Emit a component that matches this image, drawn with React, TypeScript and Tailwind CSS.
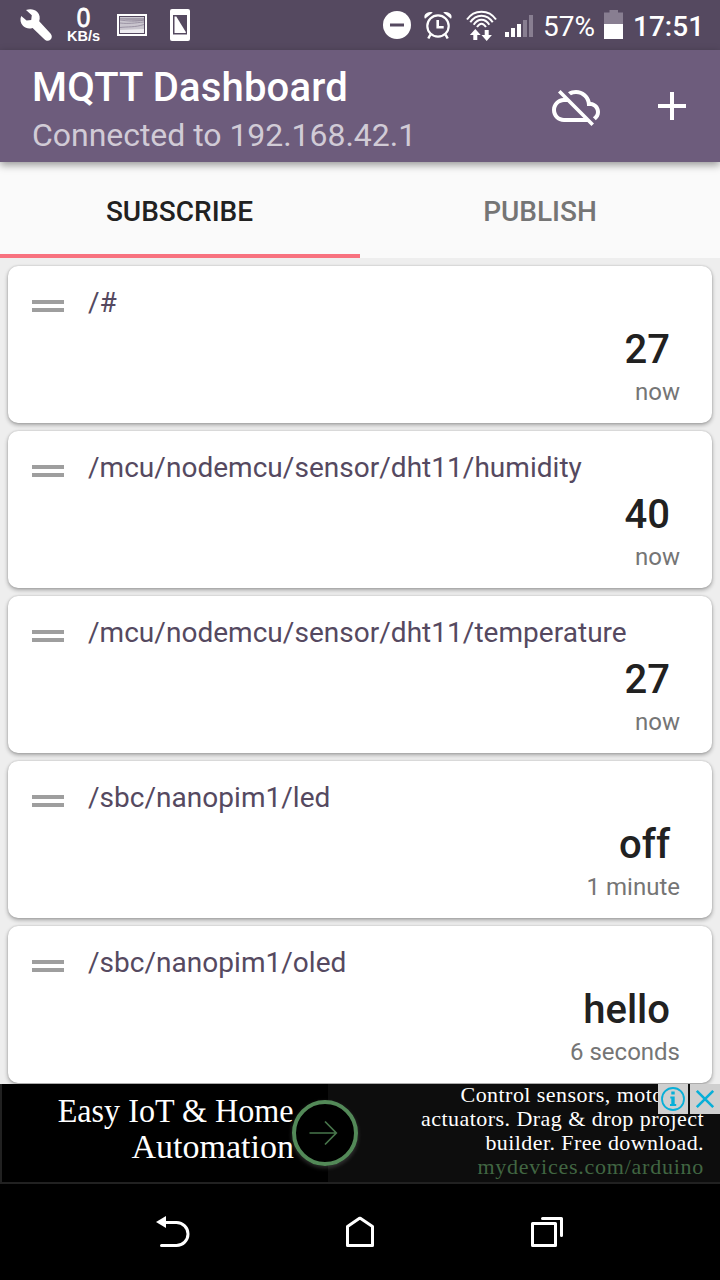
import React from "react";

type IconProps = { box: string; className: string; children: React.ReactNode };

function Icon({ box, className, children }: IconProps) {
  return (
    <svg viewBox={box} className={`shrink-0 overflow-visible ${className}`} fill="none">
      {children}
    </svg>
  );
}

const topics = [
  { topic: "/#", value: "27", age: "now" },
  { topic: "/mcu/nodemcu/sensor/dht11/humidity", value: "40", age: "now" },
  { topic: "/mcu/nodemcu/sensor/dht11/temperature", value: "27", age: "now" },
  { topic: "/sbc/nanopim1/led", value: "off", age: "1 minute" },
  { topic: "/sbc/nanopim1/oled", value: "hello", age: "6 seconds" },
];

function StatusBar() {
  return (
    <div className="flex h-[50px] shrink-0 items-start bg-[#554960] text-white">
      <Icon box="20 9 32 32" className="ml-5 mt-[9px] h-8 w-8">
        <path
          d="M26 10 C30 8.500 34.500 9 37.300 12 C39.800 14.500 40.300 18 39.200 21.200 L50.700 33.700 C52.200 35.500 52.200 38 50.600 39.600 C48.800 41.400 46.200 41.200 44.600 39.500 L32.600 27.900 C29.200 29.200 25.600 28.400 23.100 26 C20.400 23.300 19.800 19.200 21.200 16 L26.600 20.600 L31.200 20 L31.800 15.300 Z"
          fill="#fff"
        />
      </Icon>
      <div className="ml-[14px] mt-[7px] flex w-[35px] flex-col items-center font-['Liberation_Sans']">
        <span className="h-[21px] scale-x-[0.9] text-[27px] leading-[22px] [-webkit-text-stroke:0.8px_white]">0</span>
        <span className="whitespace-nowrap text-[14.5px] font-bold leading-[16px]">KB/s</span>
      </div>
      <Icon box="117 14 30 22" className="ml-[16px] mt-[14px] h-[22px] w-[30px]">
        <path d="M118 15h28v20h-28z" stroke="#fff" strokeWidth="2" />
        <path d="M120 17h24v16h-24z" fill="#c9c5ce" />
        <path d="M120 18h24v2.500c-9 1.500-16-1-24-1z" fill="#a49dab" />
        <path d="M120 20c8 1 15 2 24 0M120 23c9 1 14 0 24-1M120 27.500c8-1 15 0 24-3" stroke="#8f8799" strokeWidth="0.800" />
        <path d="M120 30c9 0 16-1 24-1v4h-24z" fill="#eeecf0" />
      </Icon>
      <Icon box="170 9 20 32" className="ml-[23px] mt-[9px] h-8 w-5">
        <rect x="170" y="9" width="20" height="32" rx="2" fill="#fff" />
        <path d="M173 15h14v19.500h-14z" fill="#554960" />
        <path d="M174.500 16.500h1.800l9.500 15.500v1h-11.300z" fill="#fff" />
      </Icon>
      <Icon box="383 11 28 28" className="ml-auto mt-[11px] h-7 w-7">
        <circle cx="397" cy="25" r="14" fill="#fff" />
        <path d="M390 25h14" stroke="#554960" strokeWidth="3" />
      </Icon>
      <Icon box="424 11 28 28" className="ml-[13px] mt-[11px] h-7 w-7">
        <circle cx="438" cy="26" r="10.700" stroke="#fff" strokeWidth="2.200" />
        <path d="M437.700 20v7.200h6" stroke="#fff" strokeWidth="2.600" />
        <path d="M425 18.800c-2.300-3.500 2-8.300 7.800-6.400zM451 18.800c2.300-3.500-2-8.300-7.800-6.400z" fill="#fff" />
        <path d="M430.500 34.500l-2.200 4M445.500 34.500l2.200 4" stroke="#fff" strokeWidth="2.500" />
      </Icon>
      <Icon box="466 9 31 32" className="ml-[14px] mt-[9px] h-8 w-[31px]">
        <path d="M467 19.500C474 9 489 9 496 19.500M470.300 22.300C476 13.500 487 13.500 492.700 22.300M473.700 24.700C478 18 485 18 489.300 24.700M477 27C480 22.500 483 22.500 486 27" stroke="#fff" strokeWidth="2" />
        <path d="M475.300 29l5.400 6h-3.400v5h-4v-5h-3.400zM486.700 41l-5.200-6h3.200v-5h4v5h3.200z" fill="#fff" />
      </Icon>
      <Icon box="505 15 28 22" className="ml-2 mt-[15px] h-[22px] w-7">
        <path d="M505 32h4v5h-4zM511 28h4v9h-4zM517 24h4v13h-4z" fill="#fff" />
        <path d="M523 20h4v17h-4zM529 15h4v22h-4z" fill="#887e91" />
      </Icon>
      <span className="ml-[10px] mt-[10px] w-[53px] whitespace-nowrap text-[28px] leading-[33px]">57%</span>
      <Icon box="604 10 19 29" className="ml-[8px] mt-[10px] h-[29px] w-[19px]">
        <path d="M609.500 10h8.500v2.500h5v12h-19v-12h5.500z" fill="#887e91" />
        <path d="M604 24h19v15h-19z" fill="#fff" />
      </Icon>
      <span className="ml-[10px] mr-[12px] mt-[10px] w-[75px] whitespace-nowrap text-[28px] font-medium leading-[33px]">17:51</span>
    </div>
  );
}

function AppBar() {
  return (
    <header className="relative z-10 flex h-[112px] shrink-0 bg-[#6d5c7c] pl-8 shadow-[0_3px_8px_rgba(0,0,0,0.4)]">
      <div className="mt-[14px] flex flex-col gap-[5px] whitespace-nowrap">
        <h1 className="text-[40px] font-medium leading-[48px] tracking-[0.18px] text-white">MQTT Dashboard</h1>
        <p className="text-[32px] leading-[36px] tracking-[-0.04px] text-[#d1cbd6]">Connected to 192.168.42.1</p>
      </div>
      <Icon box="0 0 24 24" className="ml-auto mt-[32px] h-12 w-12">
        <path
          fill="#fff"
          d="M19.350 10.040C18.670 6.590 15.640 4 12 4c-1.480 0-2.850.430-4.010 1.170l1.460 1.460C10.210 6.230 11.080 6 12 6c3.040 0 5.500 2.460 5.500 5.500v.500H19c1.660 0 3 1.340 3 3 0 1.130-.640 2.110-1.560 2.620l1.450 1.450C23.160 18.160 24 16.680 24 15c0-2.640-2.050-4.780-4.650-4.960zM3 5.270l2.750 2.740C2.560 8.150 0 10.770 0 14c0 3.310 2.690 6 6 6h11.730l2 2L21 20.730 4.270 4 3 5.270zM7.730 10l8 8H6c-2.210 0-4-1.790-4-4s1.790-4 4-4h1.730z"
        />
      </Icon>
      <Icon box="658 92 28 28" className="ml-[58px] mr-[34px] mt-[42px] h-7 w-7">
        <path d="M658 106h28M672 92v28" stroke="#fff" strokeWidth="4" />
      </Icon>
    </header>
  );
}

function Tabs() {
  return (
    <nav className="grid h-24 shrink-0 grid-cols-2 bg-[#fafafa] text-center text-[28px] font-medium leading-[33px]">
      <div className="border-b-4 border-[#f8727f] pr-px pt-[33px] text-[#212121]">SUBSCRIBE</div>
      <div className="pt-[33px] text-[#757575]">PUBLISH</div>
    </nav>
  );
}

function TopicCard({ topic, value, age }: { topic: string; value: string; age: string }) {
  return (
    <article className="flex h-[157px] shrink-0 rounded-[10px] bg-white pl-6 pr-8 shadow-[0_2px_4px_rgba(0,0,0,0.32),0_0_2px_rgba(0,0,0,0.18)]">
      <div className="mt-[34px] h-3 w-8 border-y-4 border-[#9e9e9e]" />
      <div className="ml-6 flex min-w-0 flex-1 flex-col whitespace-nowrap">
        <span className="mt-5 text-[28px] leading-[33px] tracking-[0.03px] text-[#554960]">{topic}</span>
        <span className="mt-[7px] pr-[10px] text-right text-[40px] font-medium leading-[48px] text-[#212121]">{value}</span>
        <span className="mt-[4px] text-right text-[24px] leading-[28px] text-[#757575]">{age}</span>
      </div>
    </article>
  );
}

function AdBanner() {
  return (
    <aside className="relative flex h-[100px] shrink-0 border-b-2 border-l-2 border-[#212121] bg-[#0d0d0d] font-['Liberation_Serif',serif] text-white">
      <div className="flex w-[326px] flex-col items-end bg-black pr-[34px] pt-[9px] text-[34px] leading-[36px]">
        <span className="origin-right scale-x-[0.945] whitespace-nowrap">Easy IoT &amp; Home</span>
        <span className="origin-right whitespace-nowrap">Automation</span>
      </div>
      <div className="flex flex-1 flex-col items-end whitespace-nowrap pr-4 text-[22px] leading-[24px]">
        <span className="-mt-px tracking-[0.45px]">Control sensors, motors &amp;</span>
        <span className="tracking-[0.45px]">actuators. Drag &amp; drop project</span>
        <span className="tracking-[0.42px]">builder. Free download.</span>
        <span className="tracking-[0.75px] text-[#416642]">mydevices.com/arduino</span>
      </div>
      <Icon box="292 1100 66 66" className="absolute left-[290px] top-4 h-[66px] w-[66px] rounded-full shadow-[0_2px_4px_rgba(255,255,255,0.18)]">
        <circle cx="325" cy="1133" r="31" fill="#000" stroke="#538958" strokeWidth="4" />
        <path d="M309.500 1133H336M325 1121.500L336.300 1133 325 1144.500" stroke="#47754b" strokeWidth="1.700" />
      </Icon>
      <div className="absolute right-0 top-0 flex gap-[2px] bg-[#0d0d0d]">
        <div className="flex h-[30px] w-[30px] items-center justify-center bg-[#cfcfcf]">
          <Icon box="0 0 24 24" className="h-6 w-6">
            <circle cx="12" cy="12" r="11" stroke="#08afd8" strokeWidth="1.800" />
            <path d="M10.300 4.500h3.400v3h-3.400zM9.300 9.500h4.400v7.500h1.500v2H9v-2h1.300v-5.500h-1z" fill="#08afd8" />
          </Icon>
        </div>
        <div className="flex h-[30px] w-[30px] items-center justify-center bg-[#cfcfcf]">
          <Icon box="0 0 18 18" className="h-[18px] w-[18px]">
            <path d="M.8.800l16.400 16.400M17.200.800L.8 17.200" stroke="#08afd8" strokeWidth="2.600" />
          </Icon>
        </div>
      </div>
    </aside>
  );
}

function NavBar() {
  return (
    <footer className="flex h-24 shrink-0 items-start bg-black">
      <Icon box="156 1216 33 31" className="ml-[156px] mt-8 h-[31px] w-[33px]">
        <path d="M156 1222l10-6v12z" fill="#fff" />
        <path d="M164 1222.500h12.500a11.500 11.500 0 0 1 0 23H161.500" stroke="#fff" strokeWidth="3" strokeLinecap="round" />
      </Icon>
      <Icon box="346 1216 28 31" className="ml-[157px] mt-8 h-[31px] w-7">
        <path d="M347.500 1245.500v-19l12-8.300h.8l12.200 8.300v19z" stroke="#fff" strokeWidth="3" strokeLinejoin="round" />
      </Icon>
      <Icon box="531 1216 32 31" className="ml-[157px] mt-8 h-[31px] w-8">
        <path d="M532.500 1223.500h23v22h-23zM542.500 1218.500h19v17" stroke="#fff" strokeWidth="3" strokeLinecap="round" strokeLinejoin="round" />
      </Icon>
    </footer>
  );
}

export default function App() {
  return (
    <div className="flex h-[1280px] w-[720px] flex-col overflow-hidden bg-[#eeeeee] font-['Roboto',sans-serif]">
      <StatusBar />
      <AppBar />
      <Tabs />
      <main className="flex h-[826px] shrink-0 flex-col gap-2 overflow-hidden px-2 pt-2">
        {topics.map((t) => (
          <TopicCard key={t.topic} {...t} />
        ))}
      </main>
      <AdBanner />
      <NavBar />
    </div>
  );
}
